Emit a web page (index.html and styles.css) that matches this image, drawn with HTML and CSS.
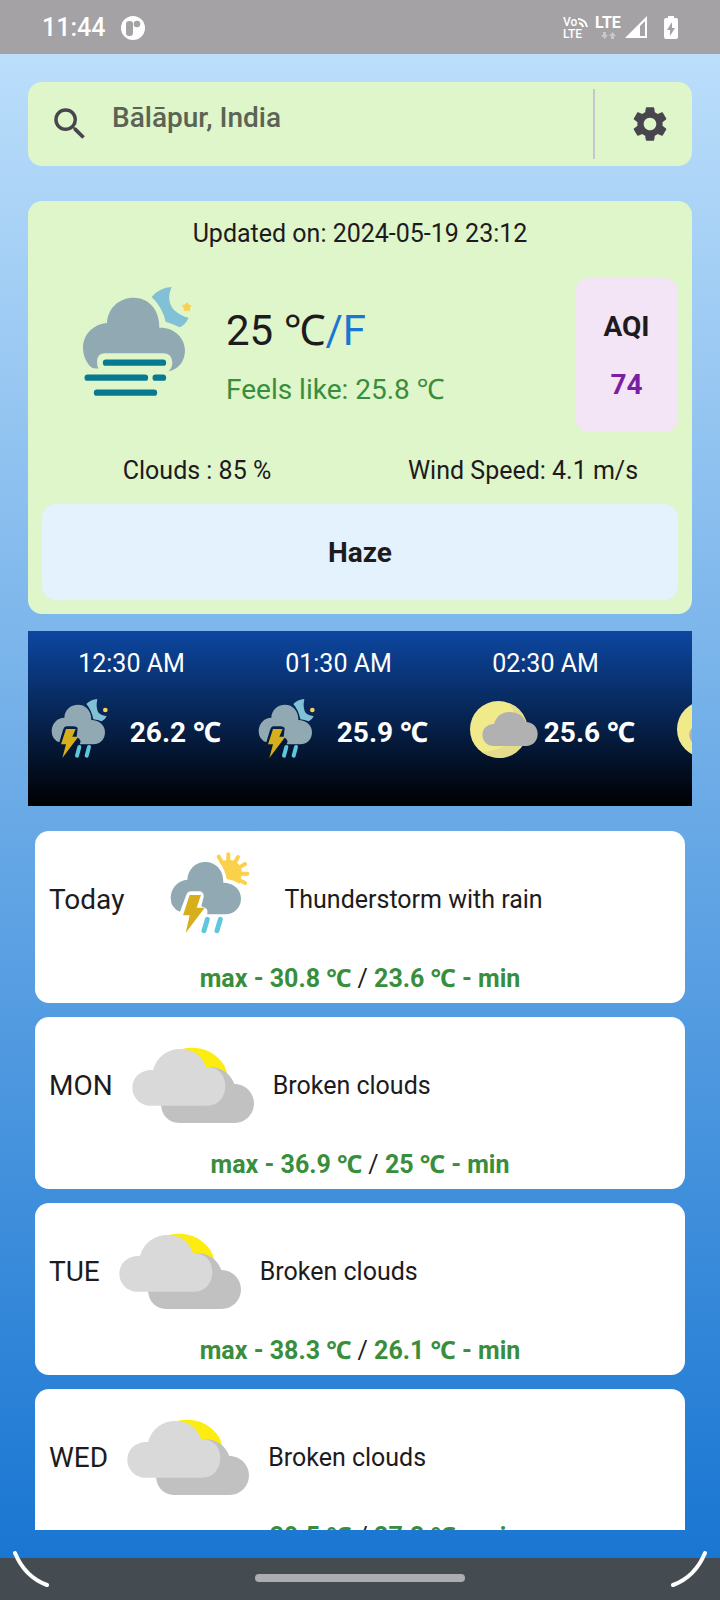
FILE: index.html
```html
<!DOCTYPE html>
<html lang="en">
<head>
<meta charset="utf-8">
<meta name="viewport" content="width=device-width, initial-scale=1">
<title>Weather</title>
<link rel="stylesheet" href="styles.css">
</head>
<body>
<svg class="defs" aria-hidden="true">
  <symbol id="haze-night" viewBox="142 284 420 420">
    <path fill="#82c1d5" d="M396 320Q420 291 456 290Q438 330 463 359Q484 378 507 382Q498 402 480 411Q461 401 438 394Q429 352 396 320Z"/>
    <path fill="#fbd04a" stroke="#fbd04a" stroke-width="3" stroke-linejoin="round" d="M502 337l4 7 8 2-5 7 1 8-8-2-8 2v-8l-6-7 9-2z"/>
    <path fill="#91a9b2" d="M236 534Q215 538 203 517Q190 496 190 472C190 431 223 401 262 398C264 354 298 322 342 322C387 322 420 358 419 412C462 410 496 442 496 480C496 513 476 538 447 543Q458 533 458 516Q457 489 430 489H254Q232 490 232 514Q232 527 236 534Z"/>
    <path fill="none" stroke="#077991" stroke-width="19" stroke-linecap="round" d="M259 517H430M204 562H376M408 562H430M232 607H403"/>
  </symbol>
  <symbol id="thunder-night" viewBox="68 207 264 264">
    <path fill="#82c1d5" d="M201 252Q214 238 234 237Q228 266 239 280Q248 288 262 289Q257 300 247 304Q235 300 222 298Q216 269 201 252Z"/>
    <circle fill="#fbd04a" cx="258" cy="270" r="7"/>
    <path fill="#91a9b2" d="M120 367Q97 358 97 332C98 309 115 293 135 293C136 270 153 254 176 254C199 254 217 272 216 300C239 300 257 315 257 336C257 359 242 373 221 373H181L184 364Q181 355 172 351L175 324Q172 320 163 319H140Q133 321 131 330Z"/>
    <path fill="#d7ae1b" d="M140 327H169L159 350H177L129 414L140 373H125Z"/>
    <path fill="none" stroke="#5ec7dd" stroke-width="12" stroke-linecap="round" d="M180 381L173 407M209 381L202 407"/>
  </symbol>
  <symbol id="moon-cloud" viewBox="288 207 264 264">
    <circle fill="#f0ea8b" cx="415" cy="328" r="85"/>
    <path fill="#e6dc8b" d="M447 249A85 85 0 1 1 366 396Q425 394 460 354Q482 302 447 249Z"/>
    <path fill="#b1b1b1" d="M398 378A33 33 0 1 1 402 312C409 289 425 276 449 276C474 276 491 289 497 306C519 306 533 322 533 342C533 363 518 378 499 378Z"/>
  </symbol>
  <symbol id="thunder-day" viewBox="345 75 420 324">
    <path fill="none" stroke="#fbd04a" stroke-width="12" stroke-linecap="round" d="M599 110L609 127M628 103V125M657 111L648 127M678 132L660 143M685 161H665M678 189L662 181"/>
    <path fill="#fbd04a" d="M602 127Q626 113 649 124Q669 138 669 162L662 191Q642 179 623 177Q619 151 602 127Z"/>
    <path fill="#91a9b2" d="M483 275Q455 264 455 233C456 203 478 181 505 179C507 147 530 126 559 126C590 126 614 150 613 188C643 188 666 208 666 236C666 262 646 283 618 283H565Q570 264 547 259L554 230Q555 214 538 214H518Q506 214 502 224Z"/>
    <path fill="#d7ae1b" d="M512 225H546L533 263H557L500 339L512 286H492Z"/>
    <path fill="none" stroke="#5ec7dd" stroke-width="15" stroke-linecap="round" d="M565 298L555 332M604 298L594 332"/>
  </symbol>
  <symbol id="broken-clouds" viewBox="309 633 420 324">
    <path fill="#fdec10" d="M487 686Q563 672 606 727Q619 744 621 762L590 770L530 740Z"/>
    <path fill="#c1c1c1" d="M477 909C446 909 423 886 423 850L540 760L563 741C602 739 631 759 643 792C677 792 702 819 702 850C702 883 676 909 645 909Z"/>
    <path fill="#d9d9d9" d="M391 857C361 857 337 833 337 803C337 773 361 748 399 750C411 710 442 687 480 687C518 687 547 706 558 741C591 739 616 763 616 798C616 833 593 857 562 857Z"/>
  </symbol>
</svg>
<div class="phone">
  <header class="status">
    <span class="clock">11:44</span>
    <svg class="notice" viewBox="0 0 24 24" aria-hidden="true"><circle cx="12" cy="12" r="12" fill="#fff"/><rect x="5" y="5" width="7" height="15" rx="3" fill="#a4a2a5"/><circle cx="16" cy="8" r="3.3" fill="#a4a2a5"/></svg>
    <svg class="signals" viewBox="0 0 118 28" aria-hidden="true">
      <g fill="#fff" font-family="Roboto, sans-serif">
        <text x="1" y="12" font-size="12" font-weight="500">Vo</text>
        <text x="1" y="24" font-size="12" font-weight="500">LTE</text>
        <text x="33" y="14" font-size="16" font-weight="700">LTE</text>
      </g>
      <path d="M17 9a5 5 0 0 1 4 4M16 5a9 9 0 0 1 9 8" fill="none" stroke="#fff" stroke-width="2"/>
      <path d="M41 18h3v3h2l-3.500 4-3.500-4h2zM49 25v-3h-2l3.500-4 3.500 4h-2v3z" fill="#c8c7c9"/>
      <path fill="#fff" fill-rule="evenodd" d="M63 24L85 2V24ZM78 12V22H83V7Z"/>
      <path fill="#fff" fill-rule="evenodd" d="M106 2h6v2h2q2 0 2 2v17q0 2-2 2h-10q-2 0-2-2V6q0-2 2-2h2zM110 8l-5 8h3v6l5-8h-3z"/>
    </svg>
  </header>
  <main class="app">
    <form class="search">
      <label class="search-icon" for="place"><svg class="icon" viewBox="0 0 24 24" role="img" aria-label="Search"><path d="M15.500 14h-.79l-.28-.27A6.471 6.471 0 0 0 16 9.500 6.500 6.500 0 1 0 9.500 16c1.610 0 3.090-.59 4.230-1.570l.27.28v.79l5 4.990L20.490 19l-4.990-5zm-6 0C7.010 14 5 11.990 5 9.500S7.010 5 9.500 5 14 7.010 14 9.500 11.990 14 9.500 14z"/></svg></label>
      <input id="place" class="place" type="text" placeholder="Bālāpur, India">
      <span class="divider"></span>
      <button class="settings" type="button" aria-label="Settings"><svg class="icon" viewBox="0 0 24 24"><path d="M19.140 12.940c.04-.3.06-.61.06-.94 0-.32-.02-.64-.07-.94l2.030-1.580c.18-.14.23-.41.12-.61l-1.920-3.320c-.12-.22-.37-.29-.59-.22l-2.390.96c-.5-.38-1.030-.7-1.620-.94l-.36-2.540c-.04-.24-.24-.41-.48-.41h-3.840c-.24 0-.43.17-.47.41l-.36 2.540c-.59.24-1.130.57-1.620.94l-2.390-.96c-.22-.08-.47 0-.59.22L2.740 8.870c-.12.21-.08.47.12.61l2.030 1.580c-.05.3-.09.63-.09.94s.02.64.07.94l-2.030 1.580c-.18.14-.23.41-.12.61l1.920 3.320c.12.22.37.29.59.22l2.390-.96c.5.38 1.030.7 1.620.94l.36 2.540c.05.24.24.41.48.41h3.840c.24 0 .44-.17.47-.41l.36-2.540c.59-.24 1.130-.56 1.620-.94l2.390.96c.22.08.47 0 .59-.22l1.920-3.320c.12-.22.07-.47-.12-.61l-2.010-1.580zM12 15.600c-1.980 0-3.600-1.620-3.600-3.600s1.620-3.600 3.600-3.600 3.600 1.620 3.600 3.600-1.620 3.600-3.600 3.600z"/></svg></button>
    </form>
    <section class="current">
      <p class="updated">Updated on: 2024-05-19 23:12</p>
      <div class="now">
        <svg class="now-icon" aria-hidden="true"><use href="#haze-night"/></svg>
        <div class="temps">
          <p class="temp">25 ℃<button class="unit" type="button">/F</button></p>
          <p class="feels">Feels like: 25.8 ℃</p>
        </div>
        <div class="aqi"><span>AQI</span><span class="aqi-value">74</span></div>
      </div>
      <div class="facts"><span>Clouds : 85 %</span><span>Wind Speed: 4.1 m/s</span></div>
      <p class="condition">Haze</p>
    </section>
    <ul class="hours">
      <li class="hour"><span>12:30 AM</span><div class="hour-row"><svg class="hour-icon"><use href="#thunder-night"/></svg><b>26.2 ℃</b></div></li>
      <li class="hour"><span>01:30 AM</span><div class="hour-row"><svg class="hour-icon"><use href="#thunder-night"/></svg><b>25.9 ℃</b></div></li>
      <li class="hour"><span>02:30 AM</span><div class="hour-row"><svg class="hour-icon"><use href="#moon-cloud"/></svg><b>25.6 ℃</b></div></li>
      <li class="hour"><span>03:30 AM</span><div class="hour-row"><svg class="hour-icon"><use href="#moon-cloud"/></svg><b>25.4 ℃</b></div></li>
    </ul>
    <ul class="days">
      <li class="day"><div class="day-row"><span class="name">Today</span><svg class="day-icon"><use href="#thunder-day"/></svg><span>Thunderstorm with rain</span></div><p class="range"><b>max - 30.8 ℃</b> / <b>23.6 ℃ - min</b></p></li>
      <li class="day"><div class="day-row"><span class="name">MON</span><svg class="day-icon"><use href="#broken-clouds"/></svg><span>Broken clouds</span></div><p class="range"><b>max - 36.9 ℃</b> / <b>25 ℃ - min</b></p></li>
      <li class="day"><div class="day-row"><span class="name">TUE</span><svg class="day-icon"><use href="#broken-clouds"/></svg><span>Broken clouds</span></div><p class="range"><b>max - 38.3 ℃</b> / <b>26.1 ℃ - min</b></p></li>
      <li class="day"><div class="day-row"><span class="name">WED</span><svg class="day-icon"><use href="#broken-clouds"/></svg><span>Broken clouds</span></div><p class="range"><b>max - 39.5 ℃</b> / <b>27.2 ℃ - min</b></p></li>
    </ul>
  </main>
  <footer class="nav">
    <svg class="corner left" viewBox="0 0 36 36" aria-hidden="true"><path d="M2 2Q12 26 34 34"/></svg>
    <span class="pill"></span>
    <svg class="corner right" viewBox="0 0 36 36" aria-hidden="true"><path d="M34 2Q24 26 2 34"/></svg>
  </footer>
</div>
</body>
</html>
```
FILE: styles.css
```css
* { box-sizing: border-box; }
body, p, ul { margin: 0; padding: 0; }
ul { list-style: none; }
body {
  font-family: Roboto, "Noto Sans", sans-serif;
  font-size: 25px;
  line-height: 30px;
  color: #1d1b20;
}
button, input { font: inherit; color: inherit; border: 0; background: none; padding: 0; margin: 0; }
svg { display: block; flex: none; }
.defs { position: absolute; width: 0; height: 0; }

.phone { display: flex; flex-direction: column; height: 100vh; overflow: hidden; }

.status {
  display: flex;
  align-items: center;
  height: 54px;
  padding: 2px 40px 0 42px;
  background: #a4a2a5;
  color: #fff;
  flex: none;
}
.clock { font-size: 25px; font-weight: 500; }
.notice { width: 24px; height: 24px; margin-left: 16px; }
.signals { width: 118px; height: 28px; margin-left: auto; }

.app {
  flex: 1;
  min-height: 0;
  display: flex;
  flex-direction: column;
  padding: 28px;
  background: linear-gradient(#bbdefb, #1976d2);
}

.search {
  display: flex;
  align-items: center;
  flex: none;
  height: 84px;
  padding: 0 21px;
  border-radius: 14px;
  background: #dff5ca;
}
.icon { width: 42px; height: 42px; fill: #49454f; }
.place {
  flex: 1;
  min-width: 0;
  height: 84px;
  margin-left: 21px;
  padding-bottom: 14px;
  font-size: 28px;
  font-weight: 500;
  outline: 0;
}
.place::placeholder { color: #5b6454; opacity: 1; }
.divider { width: 2px; height: 70px; background: #cac4d0; margin-right: 34px; }

.current {
  display: flex;
  flex-direction: column;
  flex: none;
  margin-top: 35px;
  padding: 18px 14px 14px;
  border-radius: 14px;
  background: #dff5ca;
}
.updated { text-align: center; }
.now { display: flex; align-items: center; height: 154px; margin-top: 29px; }
.now-icon { width: 140px; height: 140px; margin: 0 19px 0 25px; }
.temps { flex: 1; padding-top: 2px; }
.temp { font-size: 42px; line-height: 50px; }
.unit { color: #1976d2; }
.feels { margin-top: 18px; font-size: 28px; line-height: 32px; color: #388e3c; }
.aqi {
  display: flex;
  flex-direction: column;
  align-items: center;
  justify-content: center;
  gap: 28px;
  width: 103px;
  height: 154px;
  padding-top: 2px;
  border-radius: 14px;
  background: #f3e5f5;
  font-size: 28px;
  font-weight: 700;
}
.aqi-value { color: #7b1fa2; }
.facts {
  display: grid;
  grid-template-columns: 1fr 1fr;
  margin: 24px -8px 18px;
  text-align: center;
}
.condition {
  padding: 34px 0 32px;
  border-radius: 14px;
  background: #e3f2fd;
  font-size: 28px;
  font-weight: 700;
  text-align: center;
}

.hours {
  display: flex;
  flex: none;
  margin-top: 17px;
  overflow: hidden;
  background: linear-gradient(#0d47a1, #000);
  color: #fff;
}
.hour {
  display: flex;
  flex-direction: column;
  align-items: center;
  flex: none;
  gap: 10px;
  width: 207px;
  padding: 18px 0 29px;
}
.hour-row { display: flex; align-items: center; font-size: 28px; white-space: nowrap; }
.hour-icon { width: 88px; height: 88px; }

.days {
  flex: 1;
  min-height: 0;
  display: flex;
  flex-direction: column;
  gap: 14px;
  margin-top: 25px;
  padding: 0 7px;
  overflow: hidden;
}
.day {
  flex: none;
  padding: 14px 14px 9px;
  border-radius: 14px;
  background: #fff;
}
.day-row { display: flex; align-items: center; height: 108px; }
.day-row span { padding-top: 2px; }
.name { font-size: 28px; }
.day-icon { width: 140px; height: 108px; margin: 0 10px; }
.range { margin-top: 11px; text-align: center; }
.range b { color: #388e3c; }

.nav {
  position: relative;
  display: flex;
  align-items: center;
  justify-content: center;
  flex: none;
  height: 42px;
  padding-bottom: 2px;
  background: #444c51;
}
.pill { width: 210px; height: 8px; border-radius: 4px; background: #abadb0; }
.corner { position: absolute; top: -7px; width: 36px; height: 36px; fill: none; stroke: #fff; stroke-width: 4; stroke-linecap: round; }
.left { left: 13px; }
.right { right: 13px; }
```
